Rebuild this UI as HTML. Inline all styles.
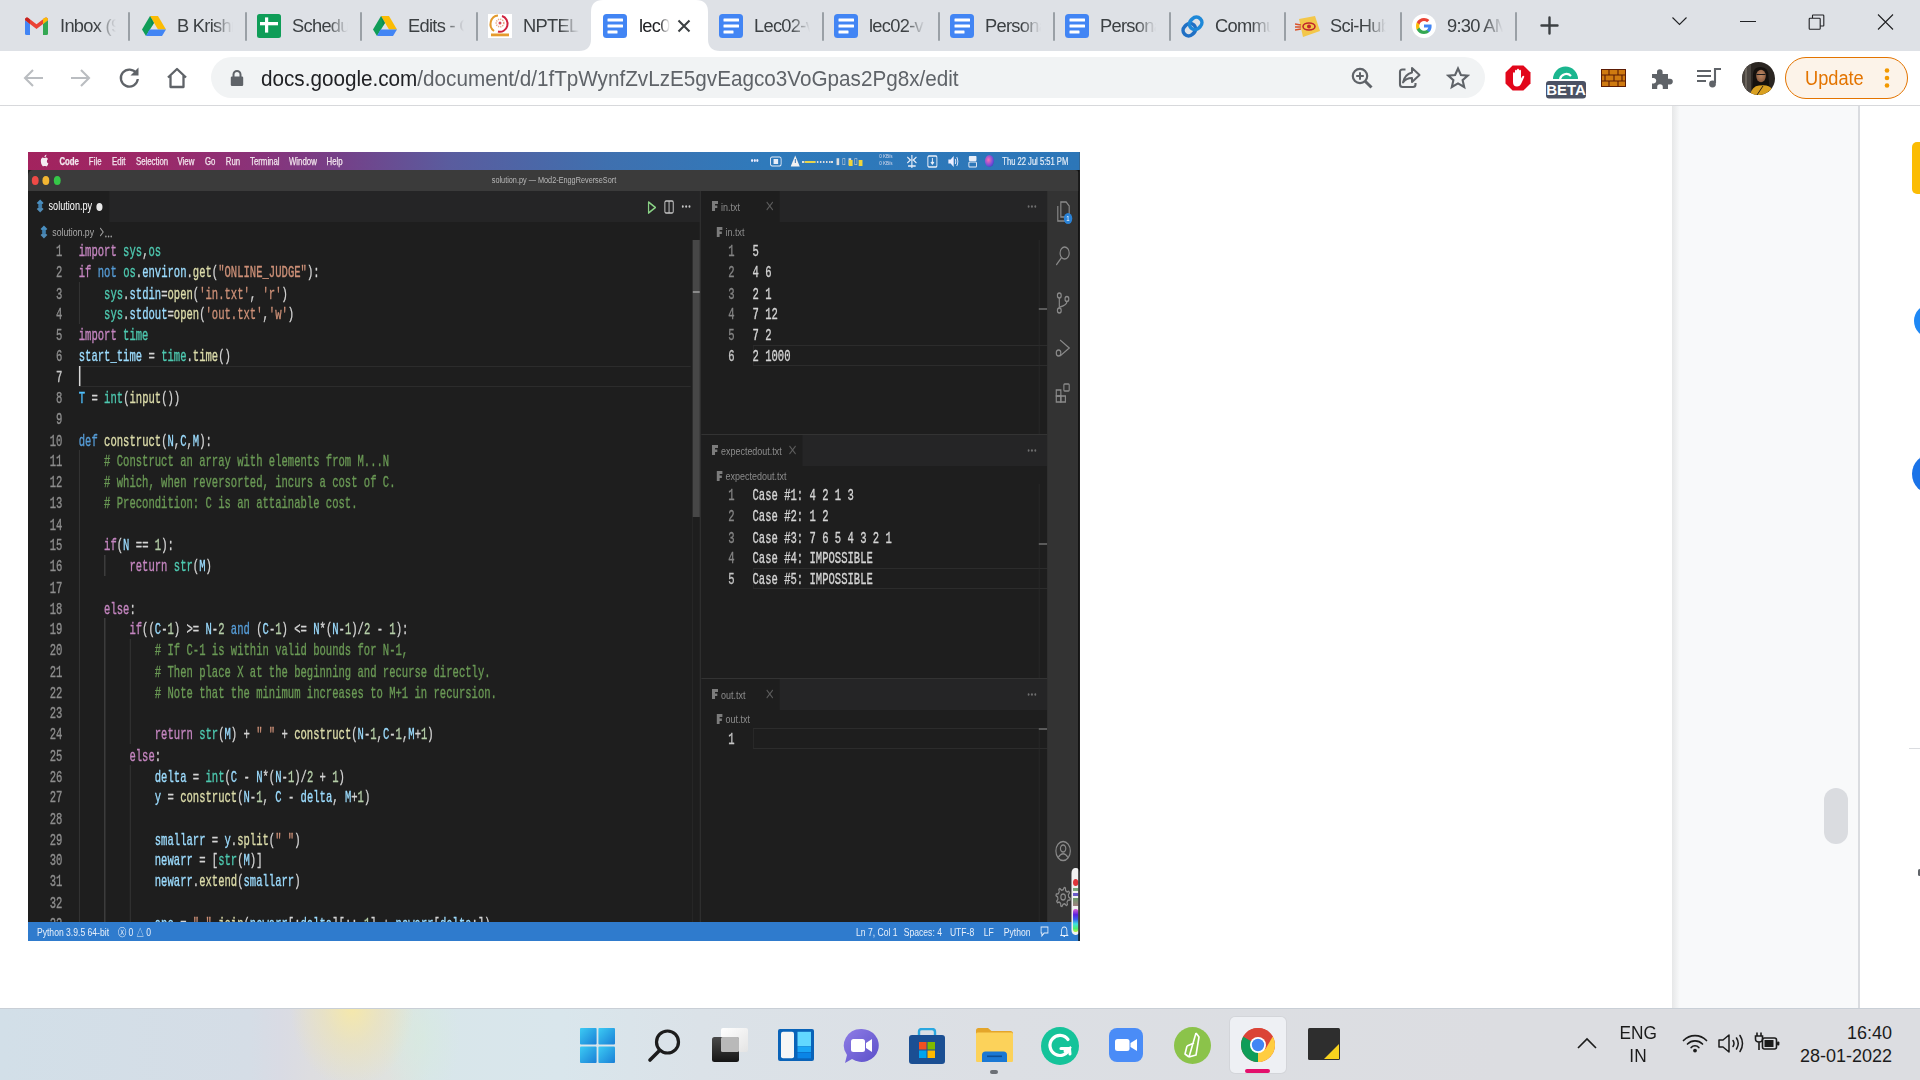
<!DOCTYPE html>
<html><head><meta charset="utf-8">
<style>
*{margin:0;padding:0;box-sizing:border-box}
html,body{width:1920px;height:1080px;overflow:hidden;background:#fff;font-family:"Liberation Sans",sans-serif}
.a{position:absolute}
#tabstrip{left:0;top:0;width:1920px;height:51px;background:#dee1e6}
.tt{position:absolute;top:15px;font-size:18.3px;color:#3c4043;white-space:nowrap;overflow:hidden;letter-spacing:-0.7px;line-height:22px;
 -webkit-mask-image:linear-gradient(90deg,#000 65%,transparent 100%)}
.sep{position:absolute;top:12px;width:2px;height:29px;background:#9aa0a6;border-radius:1px}
#toolbar{left:0;top:51px;width:1920px;height:54px;background:#fff}
#tbline{left:0;top:105px;width:1920px;height:2px;background:linear-gradient(#d6d7da,#dcdde0)}
#omni{left:211px;top:57px;width:1274px;height:41px;background:#f1f3f4;border-radius:21px}
#page{left:0;top:106px;width:1920px;height:902px;background:#fff}
#gray{left:1672px;top:106px;width:186px;height:902px;background:#f8f9fa}
.mono{font-family:"Liberation Mono",monospace;-webkit-text-stroke:0.3px currentColor}

</style></head><body>
<div id="tabstrip" class="a">
<svg class="a" style="left:579px;top:0" width="141" height="51" viewBox="0 0 141 51"><path d="M0 51 Q12 51 12 39 L12 12 Q12 0 24 0 L117 0 Q129 0 129 12 L129 39 Q129 51 141 51 Z" fill="#fff"/></svg>
<div class="sep" style="left:128px"></div>
<div class="sep" style="left:245px"></div>
<div class="sep" style="left:360px"></div>
<div class="sep" style="left:476px"></div>
<div class="sep" style="left:822px"></div>
<div class="sep" style="left:938px"></div>
<div class="sep" style="left:1053px"></div>
<div class="sep" style="left:1169px"></div>
<div class="sep" style="left:1284px"></div>
<div class="sep" style="left:1400px"></div>
<div class="sep" style="left:1515px"></div>
<svg class="a" style="left:25px;top:17px" width="23" height="18" viewBox="0 0 23 18"><path d="M0 3 L0 16.5 Q0 18 1.5 18 L5 18 L5 7 Z" fill="#4285f4"/><path d="M18 7 L18 18 L21.5 18 Q23 18 23 16.5 L23 3 Z" fill="#34a853"/><path d="M0 3 Q0 -0.5 3 0.8 L11.5 7.2 L20 0.8 Q23 -0.5 23 3 L18 7 L11.5 12 L5 7 Z" fill="#ea4335"/><path d="M18 1.8 L20 0.8 Q23 -0.5 23 3 L18 7 Z" fill="#fbbc04"/><path d="M0 3 Q0 0 2.5 0.6 L5 2.4 L5 7 Z" fill="#c5221f"/></svg>
<div class="tt" style="left:60px;width:56px">Inbox (9</div>
<svg class="a" style="left:142px;top:15px" width="24" height="22" viewBox="0 0 24 22"><path d="M8 1 L16 1 L24 14.5 L16 14.5 Z" fill="#fbbc04"/><path d="M8 1 L12 8 L4 21 L0 14.5 Z" fill="#0f9d58"/><path d="M7.5 14.5 L24 14.5 L20 21 L4 21 Z" fill="#4285f4"/><path d="M8 1 L12 8 L10 11 Z" fill="#0c7a43" opacity=".5"/></svg>
<div class="tt" style="left:177px;width:56px">B Krishna</div>
<svg class="a" style="left:257px;top:14px" width="24" height="24" viewBox="0 0 24 24"><rect width="24" height="24" rx="2.5" fill="#0f9d58"/><rect x="3" y="8" width="18" height="3.3" fill="#fff"/><rect x="8" y="3.4" width="3.2" height="15.2" fill="#fff"/></svg>
<div class="tt" style="left:292px;width:56px">Schedule</div>
<svg class="a" style="left:373px;top:15px" width="24" height="22" viewBox="0 0 24 22"><path d="M8 1 L16 1 L24 14.5 L16 14.5 Z" fill="#fbbc04"/><path d="M8 1 L12 8 L4 21 L0 14.5 Z" fill="#0f9d58"/><path d="M7.5 14.5 L24 14.5 L20 21 L4 21 Z" fill="#4285f4"/><path d="M8 1 L12 8 L10 11 Z" fill="#0c7a43" opacity=".5"/></svg>
<div class="tt" style="left:408px;width:56px">Edits - G</div>
<svg class="a" style="left:488px;top:14px" width="24" height="24" viewBox="0 0 24 24"><rect width="24" height="24" fill="#fff"/><path d="M10 1.5 A8 8.5 0 0 0 6 17" stroke="#e39a2d" stroke-width="2" fill="none"/><path d="M14 2 A7.5 8 0 0 1 10 17.5" stroke="#d0233f" stroke-width="2" fill="none"/><circle cx="12" cy="9" r="3.8" fill="none" stroke="#e8a582" stroke-width="1.6" stroke-dasharray="1.2 1"/><circle cx="12" cy="9" r="1.5" fill="#d9455b"/><rect x="3" y="19.5" width="18" height="2.8" fill="#e59b2e"/></svg>
<div class="tt" style="left:523px;width:56px">NPTEL</div>
<svg class="a" style="left:603px;top:14px" width="24" height="24" viewBox="0 0 24 24"><rect x="0" y="0" width="24" height="24" rx="3.5" fill="#4285f4"/><rect x="4.5" y="4.5" width="15.5" height="3" rx="0.5" fill="#fff"/><rect x="4.5" y="10.6" width="15.5" height="3" rx="0.5" fill="#fff"/><rect x="4.5" y="16.5" width="10" height="3" rx="0.5" fill="#fff"/></svg>
<div class="tt" style="left:639px;width:31px;color:#202124">lec02</div>
<svg class="a" style="left:677px;top:19px" width="14" height="14" viewBox="0 0 14 14"><path d="M1.5 1.5 L12.5 12.5 M12.5 1.5 L1.5 12.5" stroke="#3c4043" stroke-width="2.1"/></svg>
<svg class="a" style="left:719px;top:14px" width="24" height="24" viewBox="0 0 24 24"><rect x="0" y="0" width="24" height="24" rx="3.5" fill="#4285f4"/><rect x="4.5" y="4.5" width="15.5" height="3" rx="0.5" fill="#fff"/><rect x="4.5" y="10.6" width="15.5" height="3" rx="0.5" fill="#fff"/><rect x="4.5" y="16.5" width="10" height="3" rx="0.5" fill="#fff"/></svg>
<div class="tt" style="left:754px;width:56px">Lec02-v</div>
<svg class="a" style="left:834px;top:14px" width="24" height="24" viewBox="0 0 24 24"><rect x="0" y="0" width="24" height="24" rx="3.5" fill="#4285f4"/><rect x="4.5" y="4.5" width="15.5" height="3" rx="0.5" fill="#fff"/><rect x="4.5" y="10.6" width="15.5" height="3" rx="0.5" fill="#fff"/><rect x="4.5" y="16.5" width="10" height="3" rx="0.5" fill="#fff"/></svg>
<div class="tt" style="left:869px;width:56px">lec02-v</div>
<svg class="a" style="left:950px;top:14px" width="24" height="24" viewBox="0 0 24 24"><rect x="0" y="0" width="24" height="24" rx="3.5" fill="#4285f4"/><rect x="4.5" y="4.5" width="15.5" height="3" rx="0.5" fill="#fff"/><rect x="4.5" y="10.6" width="15.5" height="3" rx="0.5" fill="#fff"/><rect x="4.5" y="16.5" width="10" height="3" rx="0.5" fill="#fff"/></svg>
<div class="tt" style="left:985px;width:56px">Personal</div>
<svg class="a" style="left:1065px;top:14px" width="24" height="24" viewBox="0 0 24 24"><rect x="0" y="0" width="24" height="24" rx="3.5" fill="#4285f4"/><rect x="4.5" y="4.5" width="15.5" height="3" rx="0.5" fill="#fff"/><rect x="4.5" y="10.6" width="15.5" height="3" rx="0.5" fill="#fff"/><rect x="4.5" y="16.5" width="10" height="3" rx="0.5" fill="#fff"/></svg>
<div class="tt" style="left:1100px;width:56px">Personal</div>
<svg class="a" style="left:1180px;top:14px" width="25" height="25" viewBox="0 0 25 25"><g transform="rotate(-45 12.5 12.5)"><rect x="1.5" y="7" width="13" height="11" rx="5.5" fill="none" stroke="#2170c4" stroke-width="3.6"/><rect x="10.5" y="7" width="13" height="11" rx="5.5" fill="none" stroke="#1e88d8" stroke-width="3.6"/></g></svg>
<div class="tt" style="left:1215px;width:56px">Communi</div>
<svg class="a" style="left:1295px;top:16px" width="25" height="21" viewBox="0 0 25 21"><path d="M4 3 L20 0 L25 15 L8 21 Z" fill="#f3c74a"/><ellipse cx="14" cy="10.5" rx="6" ry="3.5" fill="none" stroke="#c0272d" stroke-width="1.6"/><circle cx="14" cy="10.5" r="2" fill="#c0272d"/><path d="M0 8 L6 9 M0 11 L6 11 M0 14 L6 13" stroke="#d9542b" stroke-width="1.5"/></svg>
<div class="tt" style="left:1330px;width:56px">Sci-Hub</div>
<svg class="a" style="left:1412px;top:14px" width="24" height="24" viewBox="0 0 24 24"><circle cx="12" cy="12" r="12" fill="#fff"/><path d="M19.6 12.2c0-.6-.05-1.1-.15-1.6H12v3h4.3c-.2 1-.75 1.8-1.6 2.4v2h2.6c1.5-1.4 2.3-3.4 2.3-5.8z" fill="#4285f4"/><path d="M12 20c2.2 0 4-.7 5.3-1.95l-2.6-2c-.7.5-1.6.8-2.7.8-2.1 0-3.9-1.4-4.5-3.3H4.8v2.1C6.1 18.2 8.8 20 12 20z" fill="#34a853"/><path d="M7.5 13.55c-.15-.5-.25-1-.25-1.55s.1-1.05.25-1.55V8.35H4.8C4.3 9.45 4 10.7 4 12s.3 2.55.8 3.65l2.7-2.1z" fill="#fbbc05"/><path d="M12 7.1c1.2 0 2.3.4 3.1 1.2l2.3-2.3C16 4.75 14.2 4 12 4 8.8 4 6.1 5.8 4.8 8.35l2.7 2.1c.6-1.9 2.4-3.35 4.5-3.35z" fill="#ea4335"/></svg>
<div class="tt" style="left:1447px;width:56px">9:30 AM</div>
<svg class="a" style="left:1540px;top:16px" width="19" height="19" viewBox="0 0 19 19"><path d="M9.5 1.5 V17.5 M1.5 9.5 H17.5" stroke="#3c4043" stroke-width="2.4" stroke-linecap="round"/></svg>
<svg class="a" style="left:1671px;top:14px" width="17" height="14" viewBox="0 0 17 14"><path d="M1.5 3.5 L8.5 10.5 L15.5 3.5" stroke="#202124" stroke-width="1.1" fill="none"/></svg>
<div class="a" style="left:1740px;top:20.5px;width:15.5px;height:1.2px;background:#202124"></div>
<svg class="a" style="left:1808px;top:14px" width="17" height="16" viewBox="0 0 17 16"><rect x="1.2" y="4.2" width="11" height="11" rx="0.8" fill="none" stroke="#202124" stroke-width="1.1"/><path d="M4.5 4 V1.5 Q4.5 1 5 1 L15 1 Q15.8 1 15.8 1.8 L15.8 11.5 Q15.8 12 15.3 12 H12.2" fill="none" stroke="#202124" stroke-width="1.1"/></svg>
<svg class="a" style="left:1877px;top:14px" width="17" height="16" viewBox="0 0 17 16"><path d="M1 0.5 L16 15.5 M16 0.5 L1 15.5" stroke="#202124" stroke-width="1.1"/></svg>
</div>
<div id="toolbar" class="a"></div>
<div id="omni" class="a"></div>
<div id="tbline" class="a"></div>
<svg class="a" style="left:22px;top:67px" width="22" height="22" viewBox="0 0 22 22"><path d="M21 11 H3 M11 3 L3 11 L11 19" stroke="#babdc1" stroke-width="2.1" fill="none"/></svg>
<svg class="a" style="left:70px;top:67px" width="22" height="22" viewBox="0 0 22 22"><path d="M1 11 H19 M11 3 L19 11 L11 19" stroke="#babdc1" stroke-width="2.1" fill="none"/></svg>
<svg class="a" style="left:118px;top:66px" width="23" height="23" viewBox="0 0 23 23"><path d="M18.5 7.5 A8.5 8.5 0 1 0 19.8 13" stroke="#5f6368" stroke-width="2.3" fill="none"/><path d="M20.5 1.5 L20.5 9.5 L12.5 9.5 Z" fill="#5f6368"/></svg>
<svg class="a" style="left:166px;top:67px" width="22" height="22" viewBox="0 0 22 22"><path d="M2 10.5 L11 2 L20 10.5 M4.5 8.5 V20 H17.5 V8.5" stroke="#5f6368" stroke-width="2.3" fill="none" stroke-linejoin="round"/></svg>
<svg class="a" style="left:230px;top:69px" width="14" height="18" viewBox="0 0 14 18"><path d="M3.5 8 V5.5 A3.5 3.5 0 0 1 10.5 5.5 V8" stroke="#5f6368" stroke-width="2" fill="none"/><rect x="0.8" y="7.5" width="12.4" height="9.5" rx="1.2" fill="#5f6368"/></svg>
<div class="a" style="left:261px;top:66px;font-size:22px;line-height:26px;color:#202124;white-space:nowrap;transform:scaleX(0.94);transform-origin:0 0">docs.google.com<span style="color:#5f6368">/document/d/1fTpWynfZvLzE5gvEagco3VoGpas2Pg8x/edit</span></div>
<svg class="a" style="left:1350px;top:66px" width="24" height="24" viewBox="0 0 24 24"><circle cx="10" cy="10" r="7.2" stroke="#5f6368" stroke-width="2.2" fill="none"/><path d="M15.2 15.2 L21.5 21.5" stroke="#5f6368" stroke-width="3"/><path d="M10 6.2 V13.8 M6.2 10 H13.8" stroke="#5f6368" stroke-width="2"/></svg>
<svg class="a" style="left:1398px;top:66px" width="24" height="24" viewBox="0 0 24 24"><path d="M7.5 3.5 H4.5 Q2 3.5 2 6 V18.5 Q2 21 4.5 21 H15 Q17.5 21 17.5 18.5 V17" stroke="#5f6368" stroke-width="2.1" fill="none"/><path d="M14 2 L21.5 9 L14 16 V12 Q8 12 5 16.5 Q6.5 8.5 14 6.5 Z" stroke="#5f6368" stroke-width="2" fill="none" stroke-linejoin="round"/></svg>
<svg class="a" style="left:1446px;top:66px" width="24" height="24" viewBox="0 0 24 24"><path d="M12 2.5 L14.9 9 L21.8 9.6 L16.6 14.2 L18.2 21 L12 17.4 L5.8 21 L7.4 14.2 L2.2 9.6 L9.1 9 Z" stroke="#5f6368" stroke-width="2.1" fill="none" stroke-linejoin="miter"/></svg>
<svg class="a" style="left:1505px;top:65px" width="26" height="26" viewBox="0 0 26 26"><path d="M7.6 0.5 H18.4 L25.5 7.6 V18.4 L18.4 25.5 H7.6 L0.5 18.4 V7.6 Z" fill="#e2071b"/><path d="M8 15 V8.5 Q8 7.3 9 7.3 Q10 7.3 10 8.5 V12 V6 Q10 4.8 11 4.8 Q12 4.8 12 6 V11.5 V5 Q12 3.8 13 3.8 Q14 3.8 14 5 V11.5 V6 Q14 4.8 15 4.8 Q16 4.8 16 6 V13.5 L17.2 11.5 Q18 10.3 19 11 Q19.6 11.5 19 12.6 L16.5 18 Q15 21.5 12 21.5 Q8 21.5 8 17 Z" fill="#fff"/></svg>
<svg class="a" style="left:1545px;top:64px" width="42" height="35" viewBox="0 0 42 35"><path d="M8 15 A12.5 12.5 0 0 1 33 15 Z" fill="#1bb68f"/><path d="M15 15 A6.5 6.5 0 0 1 26 12" stroke="#fff" stroke-width="2.2" fill="none"/><rect x="1" y="17" width="40" height="17.5" rx="3" fill="#4a5163"/><text x="21" y="31" font-family="Liberation Sans" font-weight="bold" font-size="15" fill="#fff" text-anchor="middle">BETA</text></svg>
<svg class="a" style="left:1601px;top:69px" width="25" height="18" viewBox="0 0 25 18"><rect width="25" height="18" fill="#cf7a10"/><g stroke="#5c1c04" stroke-width="1.1"><path d="M0 6 H25 M0 12 H25 M8 0 V6 M17 0 V6 M4 6 V12 M13 6 V12 M21 6 V12 M8 12 V18 M17 12 V18"/></g><rect x="0.5" y="0.5" width="24" height="17" fill="none" stroke="#5c1c04"/></svg>
<svg class="a" style="left:1650px;top:66px" width="24" height="24" viewBox="0 0 24 24"><path d="M2 8 H7 V6 A2.8 2.8 0 0 1 12.6 6 V8 H18 V12.8 H20 A2.8 2.8 0 0 1 20 18.4 H18 V23 H12.8 V21 A2.8 2.8 0 0 0 7.2 21 V23 H2 V17.5 H4 A2.8 2.8 0 0 0 4 12 H2 Z" fill="#5f6368"/></svg>
<svg class="a" style="left:1696px;top:66px" width="26" height="24" viewBox="0 0 26 24"><path d="M1 5 H15 M1 10 H15 M1 15 H10" stroke="#5f6368" stroke-width="2.1"/><path d="M19 17 V3 H25" stroke="#5f6368" stroke-width="2.1" fill="none"/><circle cx="16.5" cy="18" r="3.4" fill="#5f6368"/></svg>
<svg class="a" style="left:1742px;top:62px" width="33" height="33" viewBox="0 0 33 33"><defs><clipPath id="av"><circle cx="16.5" cy="16.5" r="16.5"/></clipPath><radialGradient id="avf" cx="0.5" cy="0.4" r="0.6"><stop offset="0" stop-color="#c08a66"/><stop offset="1" stop-color="#8a5a3e"/></radialGradient></defs><g clip-path="url(#av)"><rect width="33" height="33" fill="#2b2622"/><rect x="0" y="0" width="9" height="33" fill="#4a4540"/><rect x="3" y="0" width="2" height="33" fill="#6a645c"/><path d="M11 16 Q10 5 18.5 5 Q27 5 26.5 15 L28 30 L10 30 Z" fill="#15110e"/><ellipse cx="19" cy="14" rx="4.8" ry="6.2" fill="url(#avf)"/><path d="M14.5 12.5 H23.5" stroke="#1a1a1a" stroke-width="1.1"/><path d="M8 33 Q10 24 17 23.5 Q27 22 30 27 L33 33 Z" fill="#d9a020"/><path d="M15 33 L21 24" stroke="#2a2018" stroke-width="1"/></g></svg>
<div class="a" style="left:1785px;top:57px;width:123px;height:42px;border:1.7px solid #e37400;border-radius:21px;background:#fcf3e9"></div>
<div class="a" style="left:1805px;top:65px;font-size:20px;line-height:26px;color:#e37400;transform:scaleX(0.91);transform-origin:0 0">Update</div>
<svg class="a" style="left:1883px;top:67px" width="8" height="22" viewBox="0 0 8 22"><circle cx="4" cy="3.5" r="2.3" fill="#f29900"/><circle cx="4" cy="11" r="2.3" fill="#f29900"/><circle cx="4" cy="18.5" r="2.3" fill="#f29900"/></svg>
<div id="page" class="a"></div>
<div id="gray" class="a"></div>
<div class="a" style="left:1672px;top:106px;width:8px;height:902px;background:linear-gradient(90deg,#e6e7e8,#f8f9fa)"></div>
<div class="a" style="left:1858px;top:106px;width:1.5px;height:902px;background:#dadce0"></div>
<div class="a" style="left:1824px;top:788px;width:24px;height:56px;border-radius:12px;background:#dadce0"></div>
<div class="a" style="left:1912px;top:142px;width:20px;height:52px;border-radius:5px;background:#fbbc04"></div>
<div class="a" style="left:1914px;top:304px;width:34px;height:34px;border-radius:17px;background:#1e88f5"></div>
<div class="a" style="left:1912px;top:454px;width:40px;height:40px;border-radius:20px;background:#1a73e8"></div>
<div class="a" style="left:1909px;top:748px;width:11px;height:1px;background:#dadce0"></div>
<div class="a" style="left:1918px;top:869px;width:3px;height:7px;border-radius:2px;background:#5f6368"></div>
<div class="a" id="vsc" style="left:28px;top:152px;width:1384.21px;height:789px;transform:scaleX(0.76);transform-origin:0 0;overflow:hidden;background:#1e1e1e;font-family:'Liberation Sans',sans-serif">
<div class="a" style="left:0;top:0;width:100%;height:18px;background:linear-gradient(90deg,#a3235e 0%,#9b2968 12%,#89337a 22%,#744189 30%,#5a5c9e 40%,#3f70af 55%,#2f7abb 70%,#2c76b8 100%)"></div>
<svg class="a" style="left:15.5px;top:2px" width="12" height="13" viewBox="0 0 12 13"><path d="M8.2 0.5 Q8.3 2 7 3 Q6 3.6 5.6 2.8 Q5.6 1.4 8.2 0.5 Z M10.8 9.6 Q10 11.8 8.8 12.3 Q8 12.6 7 12.1 Q6 11.7 5 12.1 Q3.9 12.6 3.1 12 Q1 10 0.8 7 Q0.7 4.6 2.6 3.8 Q3.7 3.4 4.8 3.9 Q5.6 4.2 6.2 3.9 Q7.6 3.3 8.8 3.8 Q9.7 4.2 10.2 4.9 Q8.6 5.9 8.8 7.6 Q9 9 10.8 9.6 Z" fill="#f4eaf0"/></svg>
<div class="a" style="left:41.3px;top:2.5px;font-size:10.3px;line-height:14px;color:#f3e6ee;-webkit-text-stroke:0.25px #f3e6ee;font-weight:bold;white-space:nowrap">Code</div>
<div class="a" style="left:80.1px;top:2.5px;font-size:10.3px;line-height:14px;color:#f3e6ee;-webkit-text-stroke:0.25px #f3e6ee;white-space:nowrap">File</div>
<div class="a" style="left:110.5px;top:2.5px;font-size:10.3px;line-height:14px;color:#f3e6ee;-webkit-text-stroke:0.25px #f3e6ee;white-space:nowrap">Edit</div>
<div class="a" style="left:142px;top:2.5px;font-size:10.3px;line-height:14px;color:#f3e6ee;-webkit-text-stroke:0.25px #f3e6ee;white-space:nowrap">Selection</div>
<div class="a" style="left:196.7px;top:2.5px;font-size:10.3px;line-height:14px;color:#f3e6ee;-webkit-text-stroke:0.25px #f3e6ee;white-space:nowrap">View</div>
<div class="a" style="left:232.9px;top:2.5px;font-size:10.3px;line-height:14px;color:#f3e6ee;-webkit-text-stroke:0.25px #f3e6ee;white-space:nowrap">Go</div>
<div class="a" style="left:260.3px;top:2.5px;font-size:10.3px;line-height:14px;color:#f3e6ee;-webkit-text-stroke:0.25px #f3e6ee;white-space:nowrap">Run</div>
<div class="a" style="left:292.1px;top:2.5px;font-size:10.3px;line-height:14px;color:#f3e6ee;-webkit-text-stroke:0.25px #f3e6ee;white-space:nowrap">Terminal</div>
<div class="a" style="left:343.4px;top:2.5px;font-size:10.3px;line-height:14px;color:#f3e6ee;-webkit-text-stroke:0.25px #f3e6ee;white-space:nowrap">Window</div>
<div class="a" style="left:392.8px;top:2.5px;font-size:10.3px;line-height:14px;color:#f3e6ee;-webkit-text-stroke:0.25px #f3e6ee;white-space:nowrap">Help</div>
<div class="a" style="left:951px;top:2px;font-size:10px;line-height:14px;color:#eef">•••</div>
<svg class="a" style="left:976px;top:4px" width="16" height="11" viewBox="0 0 16 11"><rect x="1" y="1" width="14" height="9" rx="2" fill="none" stroke="#e8eef8" stroke-width="1.2"/><rect x="5" y="3" width="6" height="5" fill="#e8eef8"/></svg>
<svg class="a" style="left:1003px;top:3px" width="13" height="12" viewBox="0 0 13 12"><path d="M6.5 0.5 L12.5 11.5 H0.5 Z" fill="#f2f2f2"/><rect x="6" y="4" width="1.2" height="4" fill="#2d6cb0"/></svg>
<div class="a" style="left:1019px;top:7px;width:40px;height:4px;border-bottom:2px dotted #ddd"></div><div class="a" style="left:1022px;top:9px;width:14px;height:2px;background:#e6d34a"></div>
<div class="a" style="left:1063px;top:3px;width:38px;height:12px;color:#ddd;font-size:9px;line-height:12px;letter-spacing:3px">▮▯▮▯</div><div class="a" style="left:1080px;top:8px;width:5px;height:6px;background:#f0d63a"></div><div class="a" style="left:1093px;top:8px;width:5px;height:6px;background:#f0d63a"></div>
<div class="a" style="left:1120px;top:1px;font-size:6px;line-height:7px;color:#dde">0 KB/s<br>0 KB/s</div>
<svg class="a" style="left:1155px;top:3px" width="16" height="13" viewBox="0 0 16 13"><path d="M2 2 L6 5 L2 8 M14 2 L10 5 L14 8 M8 0 V13 M3 11 H13" stroke="#e8eef8" stroke-width="1.5" fill="none"/></svg>
<svg class="a" style="left:1183px;top:3px" width="14" height="13" viewBox="0 0 14 13"><rect x="1" y="1" width="12" height="11" rx="1.5" fill="none" stroke="#e8eef8" stroke-width="1.4"/><path d="M7 3 V9 M5 7 L7 9 L9 7" stroke="#e8eef8" stroke-width="1.3" fill="none"/></svg>
<svg class="a" style="left:1210px;top:3px" width="15" height="13" viewBox="0 0 15 13"><path d="M1 4.5 H4 L8 1 V12 L4 8.5 H1 Z" fill="#eef"/><path d="M10 4 Q11.5 6.5 10 9 M12 2 Q15 6.5 12 11" stroke="#eef" stroke-width="1.2" fill="none"/></svg>
<svg class="a" style="left:1236px;top:3px" width="14" height="13" viewBox="0 0 14 13"><rect x="2" y="1" width="10" height="5" rx="1" fill="#e8eef8"/><rect x="2" y="7" width="10" height="5" rx="1" fill="none" stroke="#e8eef8" stroke-width="1.2"/></svg>
<div class="a" style="left:1259px;top:3px;width:12px;height:12px;border-radius:6px;background:radial-gradient(circle at 40% 40%,#ff6bb5,#6a4bd8 60%,#2a2a8a)"></div>
<div class="a" style="left:1282px;top:3px;font-size:10px;line-height:14px;color:#e6eef8;white-space:nowrap;-webkit-text-stroke:0.2px #e6eef8">Thu 22 Jul  5:51 PM</div>
<div class="a" style="left:0;top:18px;width:100%;height:21px;background:#3b3b3b;border-radius:6px 6px 0 0"></div>
<div class="a" style="left:4.6px;top:24.2px;width:9.2px;height:9.2px;border-radius:50%;background:#ee4a46"></div>
<div class="a" style="left:19.2px;top:24.2px;width:9.2px;height:9.2px;border-radius:50%;background:#f2b532"></div>
<div class="a" style="left:33.8px;top:24.2px;width:9.2px;height:9.2px;border-radius:50%;background:#35c748"></div>
<div class="a" style="left:0;top:21px;width:100%;text-align:center;font-size:9.6px;line-height:14px;color:#b9b9b9;white-space:nowrap;padding-left:0">solution.py — Mod2-EnggReverseSort</div>
<div class="a" style="left:0;top:39px;width:884.2px;height:30.5px;background:#252526"></div>
<div class="a" style="left:0;top:39px;width:106.6px;height:30.5px;background:#1e1e1e"></div>
<svg class="a" style="left:10px;top:47px" width="12" height="14" viewBox="0 0 12 14"><path d="M6 0.5 L10.5 4 L6 7 L1.5 4 Z" fill="#4a8fc0"/><path d="M6 7 L10.5 10 L6 13.5 L1.5 10 Z" fill="#5a9fd0" opacity=".85"/><path d="M6 4 L9 7 L6 10 L3 7Z" fill="#3f7fae"/></svg>
<div class="a" style="left:27px;top:46px;font-size:12px;line-height:16px;color:#ffffff;white-space:nowrap">solution.py</div>
<div class="a" style="left:90px;top:51px;width:8px;height:8px;border-radius:4px;background:#e8e8e8"></div>
<svg class="a" style="left:815.0px;top:49px" width="12" height="13" viewBox="0 0 12 13"><path d="M1.5 1 L10.5 6.5 L1.5 12 Z" fill="none" stroke="#89d185" stroke-width="1.7" stroke-linejoin="round"/></svg>
<svg class="a" style="left:836.6px;top:48px" width="13" height="14" viewBox="0 0 13 14"><rect x="1" y="1" width="11" height="12" rx="1.5" fill="none" stroke="#c5c5c5" stroke-width="1.3"/><path d="M6.5 1 V13" stroke="#c5c5c5" stroke-width="1.3"/></svg>
<svg class="a" style="left:859.8px;top:52.8px" width="12" height="3" viewBox="0 0 12 3"><circle cx="1.5" cy="1.5" r="1.3" fill="#c5c5c5"/><circle cx="6" cy="1.5" r="1.3" fill="#c5c5c5"/><circle cx="10.5" cy="1.5" r="1.3" fill="#c5c5c5"/></svg>
<svg class="a" style="left:15px;top:73px" width="12" height="14" viewBox="0 0 12 14"><path d="M6 0.5 L10.5 4 L6 7 L1.5 4 Z" fill="#4a8fc0"/><path d="M6 7 L10.5 10 L6 13.5 L1.5 10 Z" fill="#5a9fd0" opacity=".85"/><path d="M6 4 L9 7 L6 10 L3 7Z" fill="#3f7fae"/></svg>
<div class="a" style="left:32px;top:72px;font-size:11.5px;line-height:16px;color:#a9a9a9;white-space:nowrap">solution.py</div>
<svg class="a" style="left:93.8px;top:75px" width="6" height="10" viewBox="0 0 6 10"><path d="M1 1 L5 5 L1 9" stroke="#a0a0a0" stroke-width="1.1" fill="none"/></svg>
<svg class="a" style="left:101.3px;top:83px" width="10" height="3" viewBox="0 0 10 3"><circle cx="1.5" cy="1.5" r="1" fill="#a0a0a0"/><circle cx="5" cy="1.5" r="1" fill="#a0a0a0"/><circle cx="8.5" cy="1.5" r="1" fill="#a0a0a0"/></svg>
<div class="a" style="left:67.1px;top:213.7px;width:805.3px;height:21.0px;border-top:1.3px solid #2c2c2c;border-bottom:1.3px solid #2c2c2c"></div>
<div class="a" style="left:67.1px;top:214.2px;width:2px;height:20.0px;background:#d8d8d8"></div>
<div class="a" style="left:67.1px;top:129.5px;width:1.3px;height:42.1px;background:#3c3c3c"></div>
<div class="a" style="left:67.1px;top:297.8px;width:1.3px;height:483.7px;background:#3c3c3c"></div>
<div class="a" style="left:100.4px;top:402.9px;width:1.3px;height:21.0px;background:#3c3c3c"></div>
<div class="a" style="left:100.4px;top:466.0px;width:1.3px;height:315.5px;background:#3c3c3c"></div>
<div class="a" style="left:133.7px;top:487.1px;width:1.3px;height:105.2px;background:#3c3c3c"></div>
<div class="a" style="left:133.7px;top:613.2px;width:1.3px;height:168.2px;background:#3c3c3c"></div>
<div class="a mono" style="left:0;top:88.79px;width:45.2px;text-align:right;font-size:13.9px;line-height:18.287px;transform:scaleY(1.15);transform-origin:0 0"><div style="color:#8e8e8e">1</div><div style="color:#8e8e8e">2</div><div style="color:#8e8e8e">3</div><div style="color:#8e8e8e">4</div><div style="color:#8e8e8e">5</div><div style="color:#8e8e8e">6</div><div style="color:#c6c6c6">7</div><div style="color:#8e8e8e">8</div><div style="color:#8e8e8e">9</div><div style="color:#8e8e8e">10</div><div style="color:#8e8e8e">11</div><div style="color:#8e8e8e">12</div><div style="color:#8e8e8e">13</div><div style="color:#8e8e8e">14</div><div style="color:#8e8e8e">15</div><div style="color:#8e8e8e">16</div><div style="color:#8e8e8e">17</div><div style="color:#8e8e8e">18</div><div style="color:#8e8e8e">19</div><div style="color:#8e8e8e">20</div><div style="color:#8e8e8e">21</div><div style="color:#8e8e8e">22</div><div style="color:#8e8e8e">23</div><div style="color:#8e8e8e">24</div><div style="color:#8e8e8e">25</div><div style="color:#8e8e8e">26</div><div style="color:#8e8e8e">27</div><div style="color:#8e8e8e">28</div><div style="color:#8e8e8e">29</div><div style="color:#8e8e8e">30</div><div style="color:#8e8e8e">31</div><div style="color:#8e8e8e">32</div><div style="color:#8e8e8e">33</div></div>
<div class="a mono" style="left:66.8px;top:88.79px;font-size:13.9px;line-height:18.287px;transform:scaleY(1.15);transform-origin:0 0;color:#d4d4d4;white-space:pre"><div><span style="color:#c586c0">import</span> <span style="color:#4ec9b0">sys</span>,<span style="color:#4ec9b0">os</span></div><div><span style="color:#c586c0">if</span> <span style="color:#569cd6">not</span> <span style="color:#4ec9b0">os</span>.<span style="color:#9cdcfe">environ</span>.<span style="color:#dcdcaa">get</span>(<span style="color:#ce9178">&quot;ONLINE_JUDGE&quot;</span>):</div><div>    <span style="color:#4ec9b0">sys</span>.<span style="color:#9cdcfe">stdin</span>=<span style="color:#dcdcaa">open</span>(<span style="color:#ce9178">&#x27;in.txt&#x27;</span>, <span style="color:#ce9178">&#x27;r&#x27;</span>)</div><div>    <span style="color:#4ec9b0">sys</span>.<span style="color:#9cdcfe">stdout</span>=<span style="color:#dcdcaa">open</span>(<span style="color:#ce9178">&#x27;out.txt&#x27;</span>,<span style="color:#ce9178">&#x27;w&#x27;</span>)</div><div><span style="color:#c586c0">import</span> <span style="color:#4ec9b0">time</span></div><div><span style="color:#9cdcfe">start_time</span> = <span style="color:#4ec9b0">time</span>.<span style="color:#dcdcaa">time</span>()</div><div>&nbsp;</div><div><span style="color:#4fc1ff">T</span> = <span style="color:#4ec9b0">int</span>(<span style="color:#dcdcaa">input</span>())</div><div>&nbsp;</div><div><span style="color:#569cd6">def</span> <span style="color:#dcdcaa">construct</span>(<span style="color:#9cdcfe">N</span>,<span style="color:#9cdcfe">C</span>,<span style="color:#9cdcfe">M</span>):</div><div>    <span style="color:#6a9955"># Construct an array with elements from M...N</span></div><div>    <span style="color:#6a9955"># which, when reversorted, incurs a cost of C.</span></div><div>    <span style="color:#6a9955"># Precondition: C is an attainable cost.</span></div><div>&nbsp;</div><div>    <span style="color:#c586c0">if</span>(<span style="color:#9cdcfe">N</span> == <span style="color:#b5cea8">1</span>):</div><div>        <span style="color:#c586c0">return</span> <span style="color:#4ec9b0">str</span>(<span style="color:#9cdcfe">M</span>)</div><div>&nbsp;</div><div>    <span style="color:#c586c0">else</span>:</div><div>        <span style="color:#c586c0">if</span>((<span style="color:#9cdcfe">C</span>-<span style="color:#b5cea8">1</span>) &gt;= <span style="color:#9cdcfe">N</span>-<span style="color:#b5cea8">2</span> <span style="color:#569cd6">and</span> (<span style="color:#9cdcfe">C</span>-<span style="color:#b5cea8">1</span>) &lt;= <span style="color:#9cdcfe">N</span>*(<span style="color:#9cdcfe">N</span>-<span style="color:#b5cea8">1</span>)/<span style="color:#b5cea8">2</span> - <span style="color:#b5cea8">1</span>):</div><div>            <span style="color:#6a9955"># If C-1 is within valid bounds for N-1,</span></div><div>            <span style="color:#6a9955"># Then place X at the beginning and recurse directly.</span></div><div>            <span style="color:#6a9955"># Note that the minimum increases to M+1 in recursion.</span></div><div>&nbsp;</div><div>            <span style="color:#c586c0">return</span> <span style="color:#4ec9b0">str</span>(<span style="color:#9cdcfe">M</span>) + <span style="color:#ce9178">&quot; &quot;</span> + <span style="color:#dcdcaa">construct</span>(<span style="color:#9cdcfe">N</span>-<span style="color:#b5cea8">1</span>,<span style="color:#9cdcfe">C</span>-<span style="color:#b5cea8">1</span>,<span style="color:#9cdcfe">M</span>+<span style="color:#b5cea8">1</span>)</div><div>        <span style="color:#c586c0">else</span>:</div><div>            <span style="color:#9cdcfe">delta</span> = <span style="color:#4ec9b0">int</span>(<span style="color:#9cdcfe">C</span> - <span style="color:#9cdcfe">N</span>*(<span style="color:#9cdcfe">N</span>-<span style="color:#b5cea8">1</span>)/<span style="color:#b5cea8">2</span> + <span style="color:#b5cea8">1</span>)</div><div>            <span style="color:#9cdcfe">y</span> = <span style="color:#dcdcaa">construct</span>(<span style="color:#9cdcfe">N</span>-<span style="color:#b5cea8">1</span>, <span style="color:#9cdcfe">C</span> - <span style="color:#9cdcfe">delta</span>, <span style="color:#9cdcfe">M</span>+<span style="color:#b5cea8">1</span>)</div><div>&nbsp;</div><div>            <span style="color:#9cdcfe">smallarr</span> = <span style="color:#9cdcfe">y</span>.<span style="color:#dcdcaa">split</span>(<span style="color:#ce9178">&quot; &quot;</span>)</div><div>            <span style="color:#9cdcfe">newarr</span> = [<span style="color:#4ec9b0">str</span>(<span style="color:#9cdcfe">M</span>)]</div><div>            <span style="color:#9cdcfe">newarr</span>.<span style="color:#dcdcaa">extend</span>(<span style="color:#9cdcfe">smallarr</span>)</div><div>&nbsp;</div><div>            <span style="color:#9cdcfe">ans</span> = <span style="color:#ce9178">&quot; &quot;</span>.<span style="color:#dcdcaa">join</span>(<span style="color:#9cdcfe">newarr</span>[:<span style="color:#9cdcfe">delta</span>][::-<span style="color:#b5cea8">1</span>] + <span style="color:#9cdcfe">newarr</span>[<span style="color:#9cdcfe">delta</span>:])</div></div>
<div class="a" style="left:873.7px;top:88px;width:10.5px;height:277px;background:#474747"></div>
<div class="a" style="left:873.7px;top:139px;width:10.5px;height:2px;background:#8a8a8a"></div>
<div class="a" style="left:873.7px;top:88px;width:1.3px;height:682px;background:#2a2a2a"></div>
<div class="a" style="left:884.2px;top:39px;width:1.3px;height:731px;background:#3a3a3a"></div>
<div class="a" style="left:885.5px;top:39px;width:455.3px;height:30.5px;background:#252526"></div>
<div class="a" style="left:885.5px;top:39px;width:103.3px;height:30.5px;background:#1e1e1e"></div>
<svg class="a" style="left:900.0px;top:49.0px" width="8" height="10" viewBox="0 0 8 10"><path d="M0 0 H8 V3 H4 V4.5 H7 V7 H4 V10 H0 Z" fill="#7c7c7c"/></svg>
<div class="a" style="left:911.8px;top:46.5px;font-size:11.8px;line-height:16px;color:#8c8c8c;white-space:nowrap">in.txt</div>
<svg class="a" style="left:971.1px;top:49px" width="10" height="10" viewBox="0 0 10 10"><path d="M1 1 L9 9 M9 1 L1 9" stroke="#5c5c5c" stroke-width="1.2"/></svg>
<svg class="a" style="left:1315.3px;top:53.0px" width="12" height="3" viewBox="0 0 12 3"><circle cx="1.5" cy="1.5" r="1.3" fill="#6e6e6e"/><circle cx="6" cy="1.5" r="1.3" fill="#6e6e6e"/><circle cx="10.5" cy="1.5" r="1.3" fill="#6e6e6e"/></svg>
<svg class="a" style="left:906.2px;top:74.7px" width="8" height="10" viewBox="0 0 8 10"><path d="M0 0 H8 V3 H4 V4.5 H7 V7 H4 V10 H0 Z" fill="#7c7c7c"/></svg>
<div class="a" style="left:917.9px;top:71.7px;font-size:11.8px;line-height:16px;color:#8c8c8c;white-space:nowrap">in.txt</div>
<div class="a" style="left:953.9px;top:192.9px;width:386.8px;height:21.0px;border:1.3px solid #2c2c2c;border-right:none"></div>
<div class="a mono" style="left:885.5px;top:88.79px;width:44.1px;text-align:right;font-size:13.9px;line-height:18.287px;transform:scaleY(1.15);transform-origin:0 0"><div style="color:#858585">1</div><div style="color:#858585">2</div><div style="color:#858585">3</div><div style="color:#858585">4</div><div style="color:#858585">5</div><div style="color:#c6c6c6">6</div></div>
<div class="a mono" style="left:953.3px;top:88.79px;font-size:13.9px;line-height:18.287px;transform:scaleY(1.15);transform-origin:0 0;color:#d4d4d4;white-space:pre"><div>5</div><div>4 6</div><div>2 1</div><div>7 12</div><div>7 2</div><div>2 1000</div></div>
<div class="a" style="left:1329.6px;top:88px;width:1.3px;height:194px;background:#2a2a2a"></div>
<div class="a" style="left:1330.3px;top:156.0px;width:10.5px;height:2px;background:#5a5a5a"></div>
<div class="a" style="left:885.5px;top:282px;width:455.3px;height:1.3px;background:#333"></div>
<div class="a" style="left:885.5px;top:283px;width:455.3px;height:30.5px;background:#252526"></div>
<div class="a" style="left:885.5px;top:283px;width:133.6px;height:30.5px;background:#1e1e1e"></div>
<svg class="a" style="left:900.0px;top:293.0px" width="8" height="10" viewBox="0 0 8 10"><path d="M0 0 H8 V3 H4 V4.5 H7 V7 H4 V10 H0 Z" fill="#7c7c7c"/></svg>
<div class="a" style="left:911.8px;top:290.5px;font-size:11.8px;line-height:16px;color:#8c8c8c;white-space:nowrap">expectedout.txt</div>
<svg class="a" style="left:1000.9px;top:293px" width="10" height="10" viewBox="0 0 10 10"><path d="M1 1 L9 9 M9 1 L1 9" stroke="#5c5c5c" stroke-width="1.2"/></svg>
<svg class="a" style="left:1315.3px;top:297.0px" width="12" height="3" viewBox="0 0 12 3"><circle cx="1.5" cy="1.5" r="1.3" fill="#6e6e6e"/><circle cx="6" cy="1.5" r="1.3" fill="#6e6e6e"/><circle cx="10.5" cy="1.5" r="1.3" fill="#6e6e6e"/></svg>
<svg class="a" style="left:906.2px;top:318.8px" width="8" height="10" viewBox="0 0 8 10"><path d="M0 0 H8 V3 H4 V4.5 H7 V7 H4 V10 H0 Z" fill="#7c7c7c"/></svg>
<div class="a" style="left:917.9px;top:315.75px;font-size:11.8px;line-height:16px;color:#8c8c8c;white-space:nowrap">expectedout.txt</div>
<div class="a" style="left:953.9px;top:415.9px;width:386.8px;height:21.0px;border:1.3px solid #2c2c2c;border-right:none"></div>
<div class="a mono" style="left:885.5px;top:332.79px;width:44.1px;text-align:right;font-size:13.9px;line-height:18.287px;transform:scaleY(1.15);transform-origin:0 0"><div style="color:#858585">1</div><div style="color:#858585">2</div><div style="color:#858585">3</div><div style="color:#858585">4</div><div style="color:#c6c6c6">5</div></div>
<div class="a mono" style="left:953.3px;top:332.79px;font-size:13.9px;line-height:18.287px;transform:scaleY(1.15);transform-origin:0 0;color:#d4d4d4;white-space:pre"><div>Case #1: 4 2 1 3</div><div>Case #2: 1 2</div><div>Case #3: 7 6 5 4 3 2 1</div><div>Case #4: IMPOSSIBLE</div><div>Case #5: IMPOSSIBLE</div></div>
<div class="a" style="left:1329.6px;top:332px;width:1.3px;height:194px;background:#2a2a2a"></div>
<div class="a" style="left:1330.3px;top:390.8px;width:10.5px;height:2px;background:#5a5a5a"></div>
<div class="a" style="left:885.5px;top:526px;width:455.3px;height:1.3px;background:#333"></div>
<div class="a" style="left:885.5px;top:527px;width:455.3px;height:30.5px;background:#252526"></div>
<div class="a" style="left:885.5px;top:527px;width:103.3px;height:30.5px;background:#1e1e1e"></div>
<svg class="a" style="left:900.0px;top:537.0px" width="8" height="10" viewBox="0 0 8 10"><path d="M0 0 H8 V3 H4 V4.5 H7 V7 H4 V10 H0 Z" fill="#7c7c7c"/></svg>
<div class="a" style="left:911.8px;top:534.5px;font-size:11.8px;line-height:16px;color:#8c8c8c;white-space:nowrap">out.txt</div>
<svg class="a" style="left:971.1px;top:537px" width="10" height="10" viewBox="0 0 10 10"><path d="M1 1 L9 9 M9 1 L1 9" stroke="#5c5c5c" stroke-width="1.2"/></svg>
<svg class="a" style="left:1315.3px;top:541.0px" width="12" height="3" viewBox="0 0 12 3"><circle cx="1.5" cy="1.5" r="1.3" fill="#6e6e6e"/><circle cx="6" cy="1.5" r="1.3" fill="#6e6e6e"/><circle cx="10.5" cy="1.5" r="1.3" fill="#6e6e6e"/></svg>
<svg class="a" style="left:906.2px;top:562.0px" width="8" height="10" viewBox="0 0 8 10"><path d="M0 0 H8 V3 H4 V4.5 H7 V7 H4 V10 H0 Z" fill="#7c7c7c"/></svg>
<div class="a" style="left:917.9px;top:559px;font-size:11.8px;line-height:16px;color:#8c8c8c;white-space:nowrap">out.txt</div>
<div class="a" style="left:953.9px;top:576.3px;width:386.8px;height:21.0px;border:1.3px solid #2c2c2c;border-right:none"></div>
<div class="a mono" style="left:885.5px;top:577.29px;width:44.1px;text-align:right;font-size:13.9px;line-height:18.287px;transform:scaleY(1.15);transform-origin:0 0"><div style="color:#c6c6c6">1</div></div>
<div class="a mono" style="left:953.3px;top:577.29px;font-size:13.9px;line-height:18.287px;transform:scaleY(1.15);transform-origin:0 0;color:#d4d4d4;white-space:pre"><div></div></div>
<div class="a" style="left:1329.6px;top:576px;width:1.3px;height:194px;background:#2a2a2a"></div>
<div class="a" style="left:1330.3px;top:576.0px;width:10.5px;height:2px;background:#5a5a5a"></div>
<div class="a" style="left:885.5px;top:770px;width:455.3px;height:1.3px;background:#333"></div>
<div class="a" style="left:1340.8px;top:39px;width:40.8px;height:731px;background:#333333"></div>
<svg class="a" style="left:1349.8px;top:48.0px" width="24" height="24" viewBox="0 0 24 24"><path d="M9 2 H16 L20 6 V17 H9 Z" stroke="#8a8a8a" stroke-width="1.5" fill="none"/><path d="M5 6 V21 H15" stroke="#8a8a8a" stroke-width="1.5" fill="none"/></svg>
<div class="a" style="left:1362.8px;top:61px;width:11px;height:11px;border-radius:6px;background:#2a82d6;color:#fff;font-size:8px;line-height:11px;text-align:center">1</div>
<svg class="a" style="left:1349.8px;top:92.0px" width="24" height="24" viewBox="0 0 24 24"><circle cx="14" cy="9" r="6" stroke="#8a8a8a" stroke-width="1.5" fill="none"/><path d="M10 13.5 L3 21" stroke="#8a8a8a" stroke-width="1.5" fill="none"/></svg>
<svg class="a" style="left:1349.8px;top:139.0px" width="24" height="24" viewBox="0 0 24 24"><circle cx="7" cy="4.5" r="2.5" stroke="#8a8a8a" stroke-width="1.5" fill="none"/><circle cx="7" cy="19.5" r="2.5" stroke="#8a8a8a" stroke-width="1.5" fill="none"/><circle cx="17" cy="8" r="2.5" stroke="#8a8a8a" stroke-width="1.5" fill="none"/><path d="M7 7 V17 M17 10.5 Q17 14 8 16" stroke="#8a8a8a" stroke-width="1.5" fill="none"/></svg>
<svg class="a" style="left:1349.8px;top:184.0px" width="24" height="24" viewBox="0 0 24 24"><path d="M8 4 L20 12 L8 20" stroke="#8a8a8a" stroke-width="1.5" fill="none"/><circle cx="6" cy="17" r="3" stroke="#8a8a8a" stroke-width="1.5" fill="none"/></svg>
<svg class="a" style="left:1349.8px;top:229.0px" width="24" height="24" viewBox="0 0 24 24"><rect x="3" y="9" width="6" height="6" stroke="#8a8a8a" stroke-width="1.5" fill="none"/><rect x="3" y="15" width="6" height="6" stroke="#8a8a8a" stroke-width="1.5" fill="none"/><rect x="9" y="15" width="6" height="6" stroke="#8a8a8a" stroke-width="1.5" fill="none"/><rect x="13" y="3" width="7" height="7" rx="1" stroke="#8a8a8a" stroke-width="1.5" fill="none"/></svg>
<svg class="a" style="left:1349.8px;top:687.0px" width="24" height="24" viewBox="0 0 24 24"><circle cx="12" cy="12" r="9.5" stroke="#8a8a8a" stroke-width="1.5" fill="none"/><circle cx="12" cy="9.5" r="3.5" stroke="#8a8a8a" stroke-width="1.5" fill="none"/><path d="M5.5 18.5 Q12 11 18.5 18.5" stroke="#8a8a8a" stroke-width="1.5" fill="none"/></svg>
<svg class="a" style="left:1349.8px;top:733.0px" width="24" height="24" viewBox="0 0 24 24"><circle cx="12" cy="12" r="3" stroke="#8a8a8a" stroke-width="1.5" fill="none"/><path d="M19.20 12.00 L21.41 13.34 L20.99 15.08 L18.42 15.27 L17.09 17.09 L17.70 19.60 L16.18 20.53 L14.22 18.85 L12.00 19.20 L10.66 21.41 L8.92 20.99 L8.73 18.42 L6.91 17.09 L4.40 17.70 L3.47 16.18 L5.15 14.22 L4.80 12.00 L2.59 10.66 L3.01 8.92 L5.58 8.73 L6.91 6.91 L6.30 4.40 L7.82 3.47 L9.78 5.15 L12.00 4.80 L13.34 2.59 L15.08 3.01 L15.27 5.58 L17.09 6.91 L19.60 6.30 L20.53 7.82 L18.85 9.78 Z" stroke="#8a8a8a" stroke-width="1.5" fill="none" stroke-linejoin="round"/></svg>
<div class="a" style="left:0;top:770px;width:100%;height:19px;background:#2f7bcd"></div>
<div class="a" style="left:11.8px;top:773px;font-size:11.3px;line-height:15px;color:#e8f0fa;white-space:nowrap">Python 3.9.5 64-bit</div>
<div class="a" style="left:118px;top:773px;font-size:11.3px;line-height:15px;color:#e8f0fa;white-space:nowrap">&#9447; 0 &#9651; 0</div>
<div class="a" style="left:1089.5px;top:773px;font-size:11.3px;line-height:15px;color:#e8f0fa;white-space:nowrap">Ln 7, Col 1</div>
<div class="a" style="left:1152.3px;top:773px;font-size:11.3px;line-height:15px;color:#e8f0fa;white-space:nowrap">Spaces: 4</div>
<div class="a" style="left:1213px;top:773px;font-size:11.3px;line-height:15px;color:#e8f0fa;white-space:nowrap">UTF-8</div>
<div class="a" style="left:1257.6px;top:773px;font-size:11.3px;line-height:15px;color:#e8f0fa;white-space:nowrap">LF</div>
<div class="a" style="left:1283.9px;top:773px;font-size:11.3px;line-height:15px;color:#e8f0fa;white-space:nowrap">Python</div>
<svg class="a" style="left:1331px;top:773px" width="13" height="13" viewBox="0 0 13 13"><path d="M2 2 H11 V8 H6 L3 11 V8 H2 Z" stroke="#e8f0fa" stroke-width="1.1" fill="none"/></svg>
<svg class="a" style="left:1357px;top:773px" width="13" height="13" viewBox="0 0 13 13"><path d="M3 9.5 V6 Q3 2 6.5 2 Q10 2 10 6 V9.5 L11 10.5 H2 Z M5.5 11.5 H7.5" stroke="#e8f0fa" stroke-width="1.1" fill="none"/></svg>
<div class="a" style="left:1373.0px;top:716px;width:10.5px;height:67px;border-radius:5px;background:#f2f2f2"></div>
<div class="a" style="left:1375.0px;top:727px;width:6.5px;height:7px;border-radius:4px;background:#e0343a"></div>
<div class="a" style="left:1375.0px;top:736px;width:6.5px;height:3px;background:#7aa67a"></div>
<div class="a" style="left:1375.0px;top:741px;width:6.5px;height:3px;background:#6a5ac8"></div>
<div class="a" style="left:1375.0px;top:746px;width:6.5px;height:8px;background:linear-gradient(#6a9a6a,#a08080)"></div>
<div class="a" style="left:1375.0px;top:757px;width:6.5px;height:23px;border-radius:3px;background:linear-gradient(180deg,#e060d0 0%,#5a20e0 25%,#3a60f0 45%,#40e0e0 65%,#50f070 85%,#c0f040 100%)"></div>
<div class="a" style="left:1381.6px;top:18px;width:2.6px;height:771px;background:#0e0e0e"></div>
</div>
<div class="a" style="left:0;top:1008px;width:1920px;height:72px;background:radial-gradient(ellipse 62px 80px at 352px 0px,rgba(246,232,168,0.95),rgba(240,228,175,0.55) 45%,rgba(230,230,200,0) 100%),radial-gradient(ellipse 40px 70px at 420px 30px,rgba(215,235,220,0.6),rgba(215,235,220,0)),linear-gradient(90deg,#d2dfe8 0px,#d5dde6 250px,#d9dbe4 280px,#dddde0 310px,#dfe2df 390px,#d8e6ea 430px,#d9e6ec 560px,#dbe2e8 700px,#dcdfe4 1000px,#dcdde1 1500px,#dcdde1 1920px)"></div>
<div class="a" style="left:0;top:1008px;width:1920px;height:1px;background:#c9cfd6"></div>
<svg class="a" style="left:580px;top:1028px" width="35" height="35" viewBox="0 0 35 35"><defs><linearGradient id="ws" x1="0" y1="0" x2="1" y2="1"><stop offset="0" stop-color="#3ccbf4"/><stop offset="1" stop-color="#1a7fd6"/></linearGradient></defs><rect x="0" y="0" width="16.6" height="16.6" rx="1" fill="url(#ws)"/><rect x="18.4" y="0" width="16.6" height="16.6" rx="1" fill="url(#ws)"/><rect x="0" y="18.4" width="16.6" height="16.6" rx="1" fill="url(#ws)"/><rect x="18.4" y="18.4" width="16.6" height="16.6" rx="1" fill="url(#ws)"/></svg>
<svg class="a" style="left:647px;top:1028px" width="35" height="35" viewBox="0 0 35 35"><circle cx="20.5" cy="14" r="11" stroke="#1c1c1c" stroke-width="3.2" fill="none"/><path d="M12.5 22.5 L3 32" stroke="#1c1c1c" stroke-width="3.6" stroke-linecap="round"/></svg>
<svg class="a" style="left:712px;top:1028px" width="36" height="34" viewBox="0 0 36 34"><defs><linearGradient id="tvb" x1="0" y1="0" x2="0" y2="1"><stop offset="0" stop-color="#4a4a4a"/><stop offset="1" stop-color="#151515"/></linearGradient><linearGradient id="tvw" x1="0" y1="0" x2="1" y2="1"><stop offset="0" stop-color="#ffffff"/><stop offset="1" stop-color="#e4e4e4"/></linearGradient></defs><rect x="9" y="0" width="27" height="24" rx="2" fill="url(#tvw)"/><rect x="0" y="9" width="27" height="25" rx="2.5" fill="url(#tvb)"/><rect x="9" y="9" width="18" height="15" rx="1.5" fill="#b9b9b9"/></svg>
<svg class="a" style="left:778px;top:1029px" width="36" height="32" viewBox="0 0 36 32"><rect width="36" height="32" rx="2" fill="#0a63b8"/><rect x="3" y="2.8" width="13" height="26.5" rx="2" fill="#f6f6f6"/><rect x="19.5" y="2.8" width="13.5" height="14.5" fill="#62d8ff"/><rect x="19.5" y="17.5" width="13.5" height="5.5" fill="#1aa6f5"/><rect x="19.5" y="23.5" width="13.5" height="5.8" fill="#0a85e6"/></svg>
<svg class="a" style="left:843px;top:1028px" width="36" height="36" viewBox="0 0 36 36"><defs><linearGradient id="tc" x1="0" y1="0" x2="1" y2="1"><stop offset="0" stop-color="#8f7de6"/><stop offset="1" stop-color="#5b4fc9"/></linearGradient></defs><path d="M18 1 A17 16.5 0 1 1 9 31 L2 35 L4 27 A17 16.5 0 0 1 18 1 Z" fill="url(#tc)"/><rect x="8" y="11" width="14" height="13" rx="2.5" fill="#fff"/><path d="M23 15 L29 11 V24 L23 20 Z" fill="#fff"/></svg>
<svg class="a" style="left:909px;top:1028px" width="36" height="36" viewBox="0 0 36 36"><path d="M10 8 V4 Q10 1 13 1 H23 Q26 1 26 4 V8" stroke="#2aa7e0" stroke-width="2.4" fill="none"/><rect x="0" y="7" width="36" height="29" rx="3" fill="#1b4f93"/><rect x="10" y="14" width="7.5" height="7.5" fill="#f25022"/><rect x="18.5" y="14" width="7.5" height="7.5" fill="#7fba00"/><rect x="10" y="22.5" width="7.5" height="7.5" fill="#00a4ef"/><rect x="18.5" y="22.5" width="7.5" height="7.5" fill="#ffb900"/></svg>
<svg class="a" style="left:976px;top:1028px" width="37" height="34" viewBox="0 0 37 34"><path d="M0 2.5 Q0 0 2.5 0 H12 L15.5 3 H34.5 Q37 3 37 5.5 V31 Q37 34 34 34 H3 Q0 34 0 31 Z" fill="#e4a52a"/><rect x="0" y="4.5" width="37" height="29.5" rx="1.5" fill="#fcd25a"/><path d="M6 34 V27 Q6 23.5 9.5 23.5 H27.5 Q31 23.5 31 27 V34 Z" fill="#1a78d4"/><rect x="11" y="27.5" width="15" height="1.6" fill="#0d4e94"/></svg>
<div class="a" style="left:990px;top:1070px;width:8px;height:3.5px;border-radius:2px;background:#6b6f75"></div>
<svg class="a" style="left:1041px;top:1027px" width="38" height="38" viewBox="0 0 38 38"><circle cx="19" cy="19" r="19" fill="#15c39a"/><path d="M27 12.5 A10 10 0 1 0 28.5 21.5 H20" stroke="#fff" stroke-width="3.2" fill="none" stroke-linecap="round"/><path d="M24 24 L28.5 21.5 L29 27" stroke="#fff" stroke-width="3" fill="none" stroke-linecap="round"/></svg>
<svg class="a" style="left:1109px;top:1028px" width="34" height="34" viewBox="0 0 34 34"><rect width="34" height="34" rx="8" fill="#4a8cf7"/><rect x="6" y="11" width="14.5" height="12" rx="2.5" fill="#fff"/><path d="M21.5 15 L28 11 V23 L21.5 19 Z" fill="#fff"/></svg>
<svg class="a" style="left:1174px;top:1027px" width="37" height="37" viewBox="0 0 37 37"><circle cx="18.5" cy="18.5" r="18.5" fill="#8bc34a"/><path d="M22 6 L15 30 M15 30 L11 27 L13 19 M22 6 L25 10 L22 28 L15 30 M13 19 L20 16" stroke="#fff" stroke-width="1.6" fill="none" stroke-linejoin="round"/></svg>
<div class="a" style="left:1230px;top:1017px;width:56px;height:56px;border-radius:5px;background:#eef0f4;box-shadow:0 0 0 1px rgba(0,0,0,0.04)"></div>
<svg class="a" style="left:1241px;top:1028px" width="34" height="34" viewBox="0 0 34 34"><circle cx="17" cy="17" r="17" fill="#db4437"/><path d="M17 17 L2.28 8.5 A17 17 0 0 0 17 34 Z" fill="#0f9d58"/><path d="M17 17 L17 34 A17 17 0 0 0 31.72 8.5 Z" fill="#ffcd40"/><path d="M17 17 L31.72 8.5 A17 17 0 0 0 2.28 8.5 Z" fill="#db4437"/><path d="M17 9.5 L31.72 8.5 L24.36 21.25 Z" fill="#db4437"/><path d="M17 9.5 L24.4 21.3 L17 34 Z" fill="#ffcd40" opacity="0"/><circle cx="17" cy="17" r="8" fill="#fff"/><circle cx="17" cy="17" r="6.2" fill="#4285f4"/></svg>
<div class="a" style="left:1245px;top:1069px;width:25px;height:4px;border-radius:2px;background:#e3106c"></div>
<svg class="a" style="left:1308px;top:1028px" width="32" height="32" viewBox="0 0 32 32"><rect width="32" height="32" rx="1.5" fill="#2e2e2e"/><path d="M16 31 L31 16 V31 Z" fill="#f7d21e"/></svg>
<svg class="a" style="left:1577px;top:1037px" width="20" height="12" viewBox="0 0 20 12"><path d="M1 11 L10 2 L19 11" stroke="#1b1b1b" stroke-width="1.6" fill="none"/></svg>
<div class="a" style="left:1618px;top:1021px;width:40px;font-size:18.8px;line-height:23px;transform:scaleX(0.92);color:#1b1b1b;text-align:center">ENG<br>IN</div>
<svg class="a" style="left:1682px;top:1033px" width="26" height="20" viewBox="0 0 26 20"><path d="M1.5 7.5 A16 16 0 0 1 24.5 7.5 M5.5 11 A10.5 10.5 0 0 1 20.5 11 M9.2 14.5 A5 5 0 0 1 16.8 14.5" stroke="#1b1b1b" stroke-width="1.7" fill="none" stroke-linecap="round"/><circle cx="13" cy="17.6" r="1.9" fill="#1b1b1b"/></svg>
<svg class="a" style="left:1718px;top:1033px" width="26" height="21" viewBox="0 0 26 21"><path d="M1 7 H5 L11 2 V19 L5 14 H1 Z" stroke="#1b1b1b" stroke-width="1.5" fill="none" stroke-linejoin="round"/><path d="M15 7.5 Q17 10.5 15 13.5 M18.5 5 Q22 10.5 18.5 16 M22 2.5 Q27 10.5 22 18.5" stroke="#1b1b1b" stroke-width="1.5" fill="none" stroke-linecap="round"/></svg>
<svg class="a" style="left:1754px;top:1032px" width="26" height="21" viewBox="0 0 26 21"><path d="M3 0.5 V4 M7 0.5 V4 M1.5 4 H8.5 V7 Q8.5 10 5 10 Q1.5 10 1.5 7 Z M5 10 V18" stroke="#1b1b1b" stroke-width="1.6" fill="none"/><rect x="8.5" y="6" width="14" height="11" rx="2" fill="none" stroke="#1b1b1b" stroke-width="1.6"/><rect x="10.5" y="8" width="9" height="7" fill="#1b1b1b"/><rect x="23" y="9.5" width="2.4" height="4" rx="1" fill="#1b1b1b"/></svg>
<div class="a" style="left:1780px;top:1022px;width:112px;font-size:18px;line-height:22.8px;color:#1b1b1b;text-align:right">16:40<br>28-01-2022</div>
</body></html>
